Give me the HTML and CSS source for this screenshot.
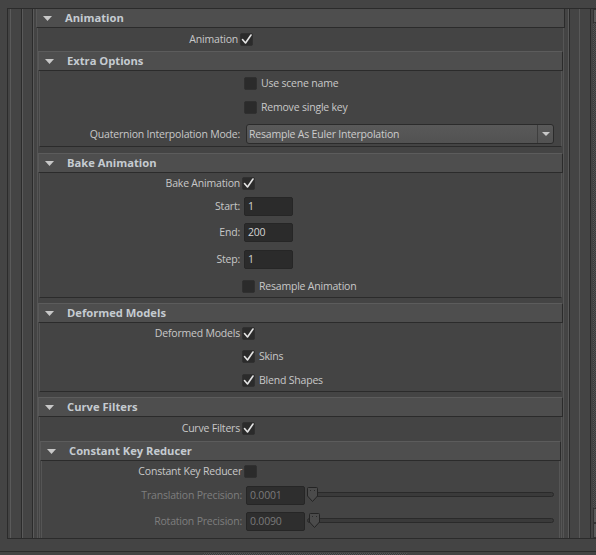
FILE: index.html
```html
<!DOCTYPE html>
<html>
<head>
<meta charset="utf-8">
<link rel="stylesheet" href="styles.css">
</head>
<body>
<div class="topstrip"></div>
<div class="main">
  <div class="panel">
    <div class="nest1"><div class="nest2"><div class="nest3">

      <section class="frame">
        <div class="fhead first"><svg class="tri" viewBox="0 0 9 5"><polygon points="0,0 9,0 4.5,5"/></svg><span>Animation</span></div>
        <div class="fbody">
          <div class="row mt1"><span class="lbl">Animation</span><span class="cb c2"><svg viewBox="0 0 13 13"><polyline points="2.5,6.5 5.5,10 11,2"/></svg></span></div>

          <section class="frame mt2">
            <div class="fhead"><svg class="tri" viewBox="0 0 9 5"><polygon points="0,0 9,0 4.5,5"/></svg><span>Extra Options</span></div>
            <div class="fbody pb2">
              <div class="row mt2"><span class="lbl"></span><span class="cb c4"></span><span class="cbtext">Use scene name</span></div>
              <div class="row mt4"><span class="lbl"></span><span class="cb c4"></span><span class="cbtext">Remove single key</span></div>
              <div class="row mt7"><span class="lbl">Quaternion Interpolation Mode:</span>
                <div class="dropdown"><span class="ddtext">Resample As Euler Interpolation</span><span class="ddarrow"><svg viewBox="0 0 8 4"><polygon points="0,0 8,0 4,4"/></svg></span></div>
              </div>
            </div>
          </section>

          <section class="frame mt6">
            <div class="fhead"><svg class="tri" viewBox="0 0 9 5"><polygon points="0,0 9,0 4.5,5"/></svg><span>Bake Animation</span></div>
            <div class="fbody pb1">
              <div class="row"><span class="lbl">Bake Animation</span><span class="cb c2"><svg viewBox="0 0 13 13"><polyline points="2.5,6.5 5.5,10 11,2"/></svg></span></div>
              <div class="row f mt4"><span class="lbl">Start:</span><span class="field short">1</span></div>
              <div class="row f mt7"><span class="lbl">End:</span><span class="field short">200</span></div>
              <div class="row f mt8"><span class="lbl">Step:</span><span class="field short">1</span></div>
              <div class="row mt7"><span class="lbl"></span><span class="cb c2"></span><span class="cbtext">Resample Animation</span></div>
            </div>
          </section>

          <section class="frame mt5">
            <div class="fhead"><svg class="tri" viewBox="0 0 9 5"><polygon points="0,0 9,0 4.5,5"/></svg><span>Deformed Models</span></div>
            <div class="fbody pb1">
              <div class="row"><span class="lbl">Deformed Models</span><span class="cb c2"><svg viewBox="0 0 13 13"><polyline points="2.5,6.5 5.5,10 11,2"/></svg></span></div>
              <div class="row mt3"><span class="lbl"></span><span class="cb c2"><svg viewBox="0 0 13 13"><polyline points="2.5,6.5 5.5,10 11,2"/></svg></span><span class="cbtext">Skins</span></div>
              <div class="row mt4"><span class="lbl"></span><span class="cb c2"><svg viewBox="0 0 13 13"><polyline points="2.5,6.5 5.5,10 11,2"/></svg></span><span class="cbtext">Blend Shapes</span></div>
            </div>
          </section>

          <section class="frame mt5">
            <div class="fhead"><svg class="tri" viewBox="0 0 9 5"><polygon points="0,0 9,0 4.5,5"/></svg><span>Curve Filters</span></div>
            <div class="fbody">
              <div class="row mt1"><span class="lbl">Curve Filters</span><span class="cb c2"><svg viewBox="0 0 13 13"><polyline points="2.5,6.5 5.5,10 11,2"/></svg></span></div>

              <section class="frame mt3">
                <div class="fhead"><svg class="tri" viewBox="0 0 9 5"><polygon points="0,0 9,0 4.5,5"/></svg><span>Constant Key Reducer</span></div>
                <div class="fbody pb10">
                  <div class="row"><span class="lbl">Constant Key Reducer</span><span class="cb c2"></span></div>
                  <div class="row f mt5 disabled"><span class="lbl">Translation Precision:</span><span class="field wide">0.0001</span>
                    <div class="slider"><div class="track"></div><svg class="handle" style="left:0px" viewBox="0 0 11 15"><path d="M1.5,0.5 H9.5 Q10.5,0.5 10.5,1.5 V9 L5.5,14.5 L0.5,9 V1.5 Q0.5,0.5 1.5,0.5 Z"/><rect x="3" y="3" width="1" height="1"/><rect x="7" y="3" width="1" height="1"/></svg></div>
                  </div>
                  <div class="row f mt7 disabled"><span class="lbl">Rotation Precision:</span><span class="field wide">0.0090</span>
                    <div class="slider"><div class="track"></div><svg class="handle" style="left:2px" viewBox="0 0 11 15"><path d="M1.5,0.5 H9.5 Q10.5,0.5 10.5,1.5 V9 L5.5,14.5 L0.5,9 V1.5 Q0.5,0.5 1.5,0.5 Z"/><rect x="3" y="3" width="1" height="1"/><rect x="7" y="3" width="1" height="1"/></svg></div>
                  </div>
                </div>
              </section>
            </div>
          </section>

        </div>
      </section>

    </div></div></div>
  </div>
  <div class="vscroll">
    <div class="sbtn top"></div>
    <div class="strack"></div>
    <div class="sbtn"></div>
    <div class="sbtn"></div>
  </div>
</div>
<div class="footer"><div class="grip"></div></div>
</body>
</html>
```

FILE: styles.css
```css
* { box-sizing: border-box; }
html, body { margin: 0; padding: 0; }
body {
  width: 596px;
  height: 555px;
  overflow: hidden;
  background: #444444;
  font-family: "Open Sans", "Liberation Sans", sans-serif;
  font-size: 10.5px;
  letter-spacing: -0.2px;
  line-height: 1;
  color: #c8c8c8;
}
.topstrip { height: 8px; }
.main { display: flex; height: 531px; }
.panel {
  flex: none;
  margin-left: 7px;
  width: 586px;
  height: 531px;
  border: 1px solid #2b2b2b;
  border-right: 0;
  background: #444444;
  overflow: hidden;
  padding-left: 2px;
}
.nest1 {
  width: 581px;
  height: 100%;
  border-left: 1px solid #5a5a5a;
  border-right: 1px solid #2b2b2b;
  padding: 0 10px;
}
.nest2 {
  height: 100%;
  border-left: 1px solid #2b2b2b;
  border-right: 1px solid #585858;
  box-shadow: inset 1px 0 #5a5a5a;
  padding: 0 9px 0 10px;
}
.nest3 {
  height: 100%;
  border-left: 1px solid #2b2b2b;
  border-right: 1px solid #2b2b2b;
  box-shadow: inset 1px 0 #5a5a5a, inset -1px 0 #5a5a5a;
  padding: 0 4px 0 3px;
}

.frame { display: flex; flex-direction: column; }
.fhead {
  flex: none;
  height: 20px;
  display: flex;
  align-items: center;
  background: #4e4e4e;
  border-top: 1px solid #5c5c5c;
  border-left: 1px solid #585858;
  border-right: 1px solid #2b2b2b;
  border-bottom: 1px solid #2b2b2b;
  font-weight: 700;
  font-size: 11.2px;
  letter-spacing: 0;
  color: #c5cbd1;
}
.fhead.first { height: 19px; border-top: 0; }
.tri { width: 9px; height: 5px; margin-left: 6px; flex: none; }
.tri polygon { fill: #c8c8c8; }
.fhead span { margin-left: 13px; }
.fbody {
  margin: 0 1px;
  border: 1px solid #555555;
  border-top: 0;
  border-bottom-color: #2b2b2b;
  background: #444444;
}
.pb1 { padding-bottom: 1px; }
.pb2 { padding-bottom: 2px; }
.pb10 { padding-bottom: 10px; }
.mt1 { margin-top: 1px; }
.mt2 { margin-top: 2px; }
.mt3 { margin-top: 3px; }
.mt4 { margin-top: 4px; }
.mt5 { margin-top: 5px; }
.mt6 { margin-top: 6px; }
.mt7 { margin-top: 7px; }
.mt8 { margin-top: 8px; }

.row { display: flex; align-items: center; height: 20px; flex: none; }
.row.f { height: 19px; }
.lbl { flex: none; width: 200px; text-align: right; white-space: nowrap; }
.disabled .lbl { color: #7e7e7e; }

.cb {
  flex: none;
  width: 13px;
  height: 13px;
  background: #2b2b2b;
  border: 1px solid #303030;
  border-radius: 2px;
  position: relative;
}
.cb svg { position: absolute; left: -1px; top: -1px; width: 13px; height: 13px; }
.cb polyline { fill: none; stroke: #e4e4e4; stroke-width: 1.6; stroke-linecap: round; stroke-linejoin: round; }
.c2 { margin-left: 2px; }
.c4 { margin-left: 4px; }
.cbtext { margin-left: 4px; white-space: nowrap; }

.field {
  flex: none;
  height: 19px;
  margin-left: 4px;
  background: #2b2b2b;
  border: 1px solid #262626;
  border-radius: 2px;
  padding-left: 3px;
  display: flex;
  align-items: center;
  color: #d4d4d4;
}
.field.short { width: 49px; }
.field.wide { width: 59px; }
.disabled .field { color: #7a7a7a; background: #2e2e2e; }

.dropdown {
  flex: none;
  margin-left: 6px;
  width: 308px;
  height: 20px;
  display: flex;
  align-items: center;
  background: linear-gradient(#595959, #525252);
  border: 1px solid #2b2b2b;
  border-radius: 3px;
  color: #cccccc;
}
.ddtext { flex: 1; padding-left: 2px; white-space: nowrap; }
.ddarrow {
  flex: none;
  width: 16px;
  height: 100%;
  border-left: 1px solid #3e3e3e;
  display: flex;
  align-items: center;
  justify-content: center;
}
.ddarrow svg { width: 8px; height: 4px; margin-top: -1px; }
.ddarrow polygon { fill: #c8c8c8; }

.slider {
  flex: 1;
  position: relative;
  height: 19px;
  margin-left: 2px;
  margin-right: 5px;
}
.track {
  margin-top: 6px;
  height: 5px;
  background: #3a3a3a;
  border: 1px solid #2a2a2a;
  border-radius: 3px;
}
.handle { position: absolute; top: 1px; width: 11px; height: 15px; }
.handle path { fill: #4b4b4b; stroke: #242424; stroke-width: 1; }
.handle rect { fill: #2b2b2b; }

.vscroll {
  flex: none;
  width: 10px;
  height: 531px;
  display: flex;
  flex-direction: column;
  border-top: 1px solid #2b2b2b;
  border-bottom: 1px solid #2b2b2b;
}
.sbtn {
  flex: none;
  height: 15px;
  background: #5a5a5a;
  border: 1px solid #333333;
}
.sbtn.top { height: 14px; }
.strack {
  flex: 1;
  background: repeating-conic-gradient(#565656 0 25%, #3a3a3a 0 50%) 0 0 / 2px 2px;
}

.footer {
  margin-top: 12px;
  border-top: 1px solid #2b2b2b;
  height: 5px;
}
.grip {
  margin-left: 203px;
  margin-top: 1px;
  width: 204px;
  height: 2px;
  background: repeating-conic-gradient(#565656 0 25%, #3a3a3a 0 50%) 0 0 / 2px 2px;
}
```
